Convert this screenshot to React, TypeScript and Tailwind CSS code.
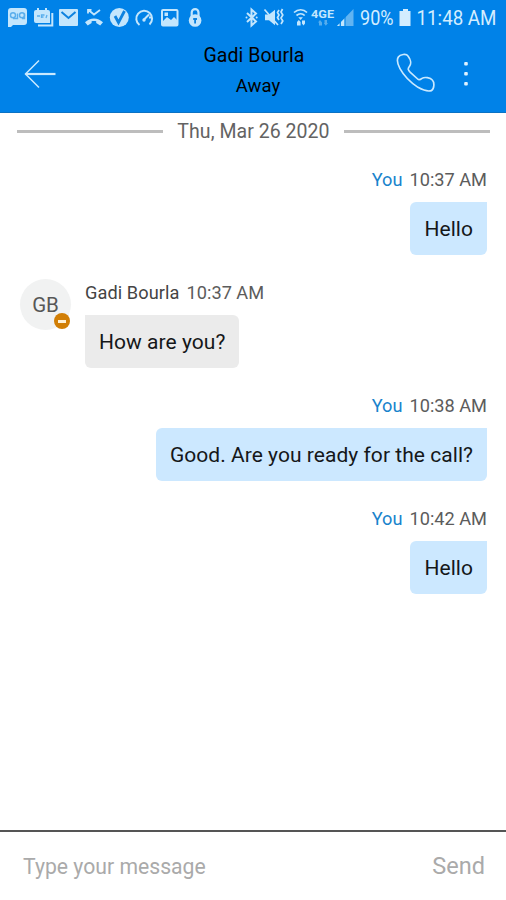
import React from 'react';

type Message = {
  id: number;
  author: string;
  time: string;
  text: string;
  own: boolean;
};

const messages: Message[] = [
  { id: 1, author: 'You', time: '10:37 AM', text: 'Hello', own: true },
  { id: 2, author: 'Gadi Bourla', time: '10:37 AM', text: 'How are you?', own: false },
  { id: 3, author: 'You', time: '10:38 AM', text: 'Good. Are you ready for the call?', own: true },
  { id: 4, author: 'You', time: '10:42 AM', text: 'Hello', own: true },
];

// Notification icons on the left of the status bar
function NotificationIcons() {
  return (
    <svg className="h-9 w-[210px] shrink-0" viewBox="0 0 210 36" fill="none">
      {/* voicemail */}
      <path fill="#c3e6fd" d="M11 8h13a3 3 0 0 1 3 3v11a3 3 0 0 1-3 3H13l-2 2H8V11a3 3 0 0 1 3-3z" />
      <g stroke="#5aaeec" strokeWidth="1.4">
        <circle cx="13" cy="15.3" r="2.5" />
        <circle cx="22" cy="15.3" r="2.5" />
        <path d="M13 18.5h4.5v-5M22 18.5h2.5v-5" />
      </g>
      {/* calendar */}
      <path fill="#c3e6fd" d="M36 10h1V8h2v2h6V8h2v2h1a2 2 0 0 1 2 2v11H36a2 2 0 0 1-2-2v-9a2 2 0 0 1 2-2z" />
      <path stroke="#c3e6fd" strokeWidth="2" d="M52.300 13v12.500H38" />
      <path stroke="#5aaeec" strokeWidth="1.300" d="M37 16h3M41.500 18v-3h3M41.500 17h2M46 18l1-3" />
      {/* mail */}
      <rect x="59" y="9" width="19" height="17" rx="1" fill="#c3e6fd" />
      <path stroke="#0d82df" strokeWidth="2" d="M61.500 12l7 6 7-6" />
      {/* missed call */}
      <path stroke="#c3e6fd" strokeWidth="1.800" d="M88 13.500V9.800h3.500M88.500 10l5.500 4.500 6-4.500" />
      <path fill="#c3e6fd" d="M85 22.300c5-5.200 13-5.200 18 0l-2.800 3.200-4-2.600v-1.700c-1.600-.4-3-.4-4.600 0v1.700L87.700 25.500z" />
      {/* check */}
      <circle cx="119.300" cy="17.500" r="9.500" fill="#c3e6fd" />
      <path stroke="#0d82df" strokeWidth="2.800" d="M115 16l3.500 6.500L124.500 11" />
      {/* gauge */}
      <path stroke="#c3e6fd" strokeWidth="2" d="M139.500 25a7.900 7.900 0 1 1 10-.5M144 19.500l5-5M152 17.500h-3" />
      <circle cx="144" cy="20" r="1.700" fill="#c3e6fd" />
      {/* picture */}
      <rect x="162" y="10" width="15.500" height="15.500" rx="1" stroke="#c3e6fd" strokeWidth="2" />
      <path fill="#c3e6fd" d="M162 25v-3l5-5 4 3 3-3 4 4v4zM164.500 12.500h3.500v3.500h-3.500z" />
      {/* lock */}
      <path stroke="#c3e6fd" strokeWidth="2.200" d="M191.700 17v-4.500a3.400 3.400 0 0 1 6.800 0V17" />
      <circle cx="195.100" cy="20.500" r="6.300" fill="#c3e6fd" />
      <path stroke="#0d82df" strokeWidth="1.800" d="M195.100 18v5.500M193.200 19h3.800" />
    </svg>
  );
}

// Bluetooth, sound, wifi and signal state
function ConnectionIcons() {
  return (
    <svg className="h-9 w-[112px] shrink-0" viewBox="243 0 112 36" fill="none">
      <path stroke="#c3e6fd" strokeWidth="2" d="M247 13l9 8.500-4.500 4V9.500l4.500 4-9 8.500" />
      <circle cx="246.500" cy="17.500" r="1" fill="#c3e6fd" />
      <circle cx="256.700" cy="17.500" r="1" fill="#c3e6fd" />
      {/* muted speaker */}
      <path fill="#c3e6fd" d="M265 14.500h4l6-4.800v15.600l-6-5h-4z" />
      <path stroke="#c3e6fd" strokeWidth="1.700" d="M264.500 9.500L278 25M279 10l-1.500 2.500 1.500 2.500-1.500 2.500 1.500 2.500M282.500 9l-1.500 3 1.800 3-1.800 3 1.800 3-1.800 3" />
      {/* wifi */}
      <path stroke="#c3e6fd" strokeWidth="1.700" d="M294 12.500c4-3.700 9.500-3.700 13 0M296.500 15.500c2.500-2.300 6-2.300 8.200 0" />
      <path fill="#c3e6fd" d="M298.300 17.200h4.600l-2.300 2.800zM297 22l1.800-2 1.800 2v3.500H297zM302 20.500h3v3l-1.500 2-1.500-2z" />
      <text
        x="311"
        y="17.500"
        textLength="23"
        lengthAdjust="spacingAndGlyphs"
        className="fill-[#c3e6fd] text-[10px] font-bold"
      >
        4GE
      </text>
      <path fill="#56adee" d="M318 22.500l2-2.500 2 2.500v3h-3v-3zM324.500 20h2.500v3h1l-2.200 2.700-2-2.700h.7z" />
      {/* signal */}
      <path fill="#61b4f2" d="M353.500 9v17H337z" />
      <path fill="#c3e6fd" d="M339.500 23.500V26H337zM344.500 18.500V26H341v-4z" />
      <path stroke="#0082e6" d="M340.300 20v7M345 15v12" />
    </svg>
  );
}

function StatusBar() {
  return (
    <div className="flex h-9 items-center">
      <NotificationIcons />
      <div className="w-[33px]" />
      <ConnectionIcons />
      <svg className="h-9 w-[151px] shrink-0" viewBox="355 0 151 36">
        <text x="360" y="25" textLength="33.500" lengthAdjust="spacingAndGlyphs" className="fill-[#d3edff] text-[19.500px]">
          90%
        </text>
        <path fill="#d3edff" d="M403 9h5v2h2.500v15h-11V11h3.500z" />
        <text x="416.500" y="25" textLength="80" lengthAdjust="spacingAndGlyphs" className="fill-[#d3edff] text-[19.500px]">
          11:48 AM
        </text>
      </svg>
    </div>
  );
}

function Header() {
  return (
    <header className="h-[113px] border-b border-[#0a72c4] bg-[#0082e8]">
      <StatusBar />
      <div className="flex h-[76px]">
        <button aria-label="Back" className="flex w-[79px] justify-center pt-[23px]">
          <svg className="h-[30px] w-8" viewBox="0 0 32 30" fill="none" stroke="#c9e9ff">
            <path strokeWidth="1.500" d="M15 1.500L1.500 15 15 28.500" />
            <path strokeWidth="2.200" d="M1.500 15H31.500" />
          </svg>
        </button>
        <div className="flex grow flex-col items-center pt-[5px] pl-[34px] text-black">
          <h1 className="text-[19.500px] leading-[29px] tracking-[0.050px]">Gadi Bourla</h1>
          <p className="pl-2 text-[18.500px] leading-[32px]">Away</p>
        </div>
        <div className="flex shrink-0 items-start pr-[15px]">
          <button aria-label="Call" className="w-[46px] pt-[16px]">
            <svg className="h-[42px] w-[42px]" viewBox="45 38 126 126" fill="none" stroke="#c9e9ff" strokeWidth="5">
              <path d="M55 53C60 45 79 42 84 50C91 59 95 72 89 80C82 89 84 92 91 99L113 119C117 123 121 121 126 117C134 112 151 115 157 122C164 129 163 149 154 154C144 157 130 153 114 144C91 129 72 110 60 88C53 75 50 61 55 53Z" />
            </svg>
          </button>
          <button aria-label="More" className="flex w-[50px] justify-center pt-[25px]">
            <svg className="h-[26px] w-1" viewBox="0 0 4 26" fill="#dff2ff">
              <rect x="0.200" y="1" width="3.600" height="3.600" rx="1" />
              <rect x="0.200" y="11" width="3.600" height="3.600" rx="1" />
              <rect x="0.200" y="21" width="3.600" height="3.600" rx="1" />
            </svg>
          </button>
        </div>
      </div>
    </header>
  );
}

function DateDivider({ label }: { label: string }) {
  return (
    <div className="flex h-9 items-center gap-[14px] pr-4 pl-[17px]">
      <div className="h-[3px] flex-1 bg-[#bdbdbd]" />
      <span className="pt-[2px] text-[19.500px] tracking-[0.050px] text-[#636363]">{label}</span>
      <div className="h-[3px] flex-1 bg-[#bdbdbd]" />
    </div>
  );
}

function Avatar() {
  return (
    <div className="relative mt-[-1px] flex size-[51px] shrink-0 items-center justify-center rounded-full bg-[#f1f2f2] pt-0.5 text-[20.500px] text-[#575757]">
      GB
      <span className="absolute right-px bottom-px flex size-4 items-center justify-center rounded-full bg-[#d17e05]">
        <span className="h-[3px] w-2 bg-[#fff0d4]" />
      </span>
    </div>
  );
}

function MessageRow({ message }: { message: Message }) {
  const { own } = message;
  return (
    <div className={`flex h-[113px] ${own ? 'justify-end pr-[19px]' : 'gap-[14px] pl-5'}`}>
      {!own && <Avatar />}
      <div className={`flex flex-col ${own ? 'items-end' : 'items-start'}`}>
        <div className="flex h-[35px] gap-[7px] text-[18.200px] leading-[25px]">
          <span className={own ? 'text-[#1883cc]' : 'tracking-[0.080px] text-[#444]'}>{message.author}</span>
          <span className="text-[#5c5c5c]">{message.time}</span>
        </div>
        <div
          className={`h-[53px] rounded-md px-[14px] text-[21px] leading-[55px] tracking-[0.040px] whitespace-nowrap text-[#151719] ${
            own ? 'rounded-tr-none bg-[#cce8ff]' : 'rounded-tl-none bg-[#ebebeb]'
          }`}
        >
          {message.text}
        </div>
      </div>
    </div>
  );
}

export default function App() {
  return (
    <div className="flex h-screen w-full flex-col overflow-hidden bg-white font-['Roboto',sans-serif]">
      <Header />
      <main className="flex-1">
        <DateDivider label="Thu, Mar 26 2020" />
        <div className="pt-[18px]">
          {messages.map((message) => (
            <MessageRow key={message.id} message={message} />
          ))}
        </div>
      </main>
      <footer className="flex h-[70px] items-center justify-between border-t-2 border-[#555] pt-0.5 pr-[21px] pl-[23px] text-[#aaa]">
        <span className="text-[21.200px]">Type your message</span>
        <button className="text-[23.500px]">Send</button>
      </footer>
    </div>
  );
}
